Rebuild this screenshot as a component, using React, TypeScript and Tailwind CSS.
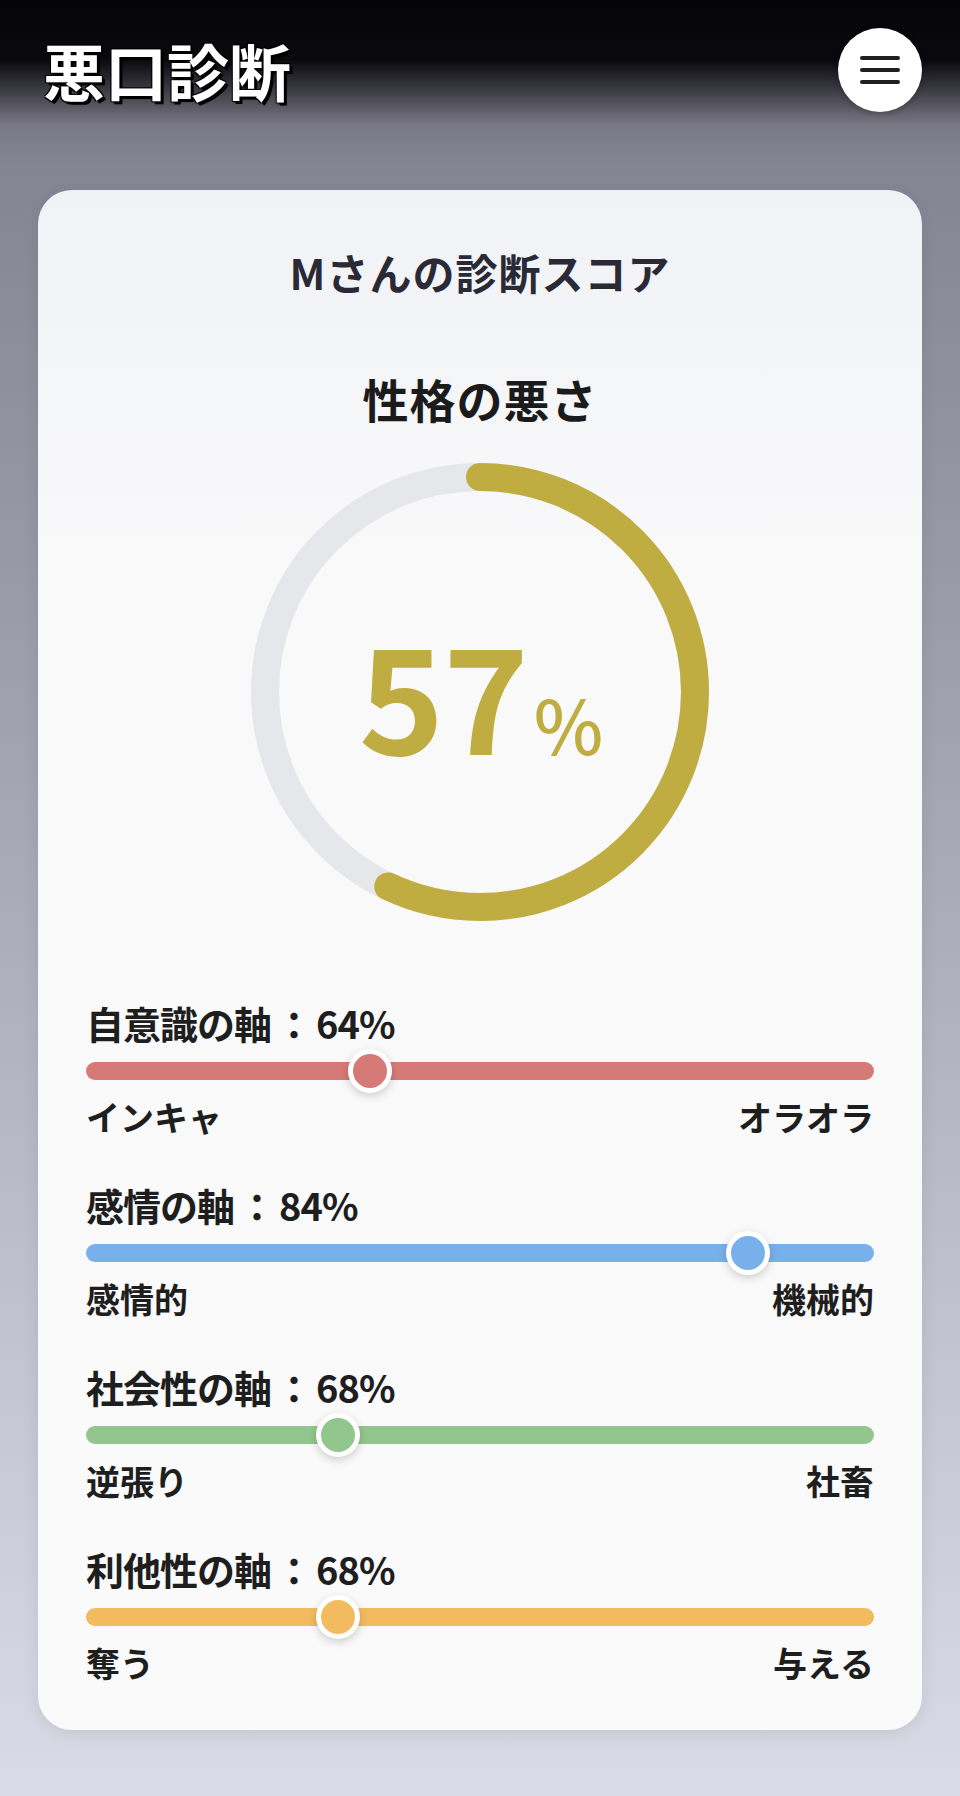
const axes = [
  { label: "自意識の軸", value: 64, position: 36, left: "インキャ", right: "オラオラ", color: "bg-[#d67a77]" },
  { label: "感情の軸", value: 84, position: 84, left: "感情的", right: "機械的", color: "bg-[#78b0eb]" },
  { label: "社会性の軸", value: 68, position: 32, left: "逆張り", right: "社畜", color: "bg-[#93c68c]" },
  { label: "利他性の軸", value: 68, position: 32, left: "奪う", right: "与える", color: "bg-[#f2bb5f]" },
];

const RADIUS = 215;
const CIRCUMFERENCE = 2 * Math.PI * RADIUS;

const ScoreRing = ({ score }: { score: number }) => (
  <div className="relative mx-auto mt-[29px] size-[460px]">
    <svg viewBox="0 0 460 460" className="size-full -rotate-90" aria-hidden="true">
      <circle cx="230" cy="230" r={RADIUS} fill="none" stroke="#e6e7eb" strokeWidth="28" />
      <circle
        cx="230"
        cy="230"
        r={RADIUS}
        fill="none"
        stroke="#c0ad41"
        strokeWidth="28"
        strokeLinecap="round"
        strokeDasharray={CIRCUMFERENCE}
        strokeDashoffset={CIRCUMFERENCE * (1 - score / 100)}
      />
    </svg>
    <div className="absolute inset-0 flex items-center justify-center text-[#c0ad41]">
      <span className="flex items-baseline pl-[2px]">
        <span className="text-[145px] leading-none font-bold tracking-[-1px]">{score}</span>
        <span className="ml-[6px] text-[74px] leading-none font-medium">%</span>
      </span>
    </div>
  </div>
);

export default function App() {
  return (
    <div
      className="min-h-[1796px] bg-[linear-gradient(180deg,#050509_0px,#09090e_60px,#7a7986_126px,#858492_165px,#d9dce6_100%)] pb-[68px]"
      style={{ fontFamily: '"Noto Sans CJK JP", "Noto Sans", sans-serif' }}
    >
      <header className="flex items-center justify-between pt-[28px] pr-[38px] pl-[43px]">
        <h1 className="text-[62px] leading-none font-bold text-white [text-shadow:3px_3px_0_#000,-1px_-1px_0_#000,1px_-1px_0_#000,-1px_1px_0_#000,2px_2px_2px_#000]">
          悪口診断
        </h1>
        <button
          type="button"
          aria-label="メニュー"
          className="flex size-[84px] items-center justify-center rounded-full bg-white shadow-[0_2px_6px_rgba(0,0,0,0.25)]"
        >
          <svg viewBox="0 0 40 30" className="h-[30px] w-[40px]" aria-hidden="true">
            <path d="M2 3h36M2 15h36M2 27h36" stroke="#1f1f24" strokeWidth="4" strokeLinecap="round" />
          </svg>
        </button>
      </header>

      <main className="mx-[38px] mt-[78px] rounded-[34px] bg-[linear-gradient(180deg,#f1f2f5_0%,#f9f9fa_25%,#fafafa_100%)] px-12 pt-[50px] pb-[43px] shadow-[0_4px_16px_rgba(0,0,0,0.08)]">
        <h2 className="text-center text-[42px] leading-[63px] font-bold tracking-[1px] text-[#2a2a37]">
          Mさんの診断スコア
        </h2>
        <h3 className="mt-[61px] text-center text-[46px] leading-[69px] font-bold tracking-[1px] text-[#1b1b1b]">
          性格の悪さ
        </h3>

        <ScoreRing score={57} />

        <div className="mt-[76px] flex flex-col gap-[39px]">
          {axes.map((axis) => (
            <section key={axis.label} className="text-[#1e1e1e]">
              <p className="text-[38px] leading-[49px] font-bold tracking-[-1px]">
                {axis.label}
                <span className="mx-[4px]">：</span>
                {axis.value}%
              </p>
              <div className={`relative mt-[15px] h-[18px] rounded-full ${axis.color}`}>
                <span
                  className={`absolute top-1/2 size-[44px] -translate-x-1/2 -translate-y-1/2 rounded-full border-[5px] border-white shadow-[0_3px_8px_rgba(0,0,0,0.18)] ${axis.color}`}
                  style={{ left: `${axis.position}%` }}
                />
              </div>
              <div className="mt-[12px] flex justify-between text-[34px] leading-[49px] font-bold">
                <span>{axis.left}</span>
                <span>{axis.right}</span>
              </div>
            </section>
          ))}
        </div>
      </main>
    </div>
  );
}
